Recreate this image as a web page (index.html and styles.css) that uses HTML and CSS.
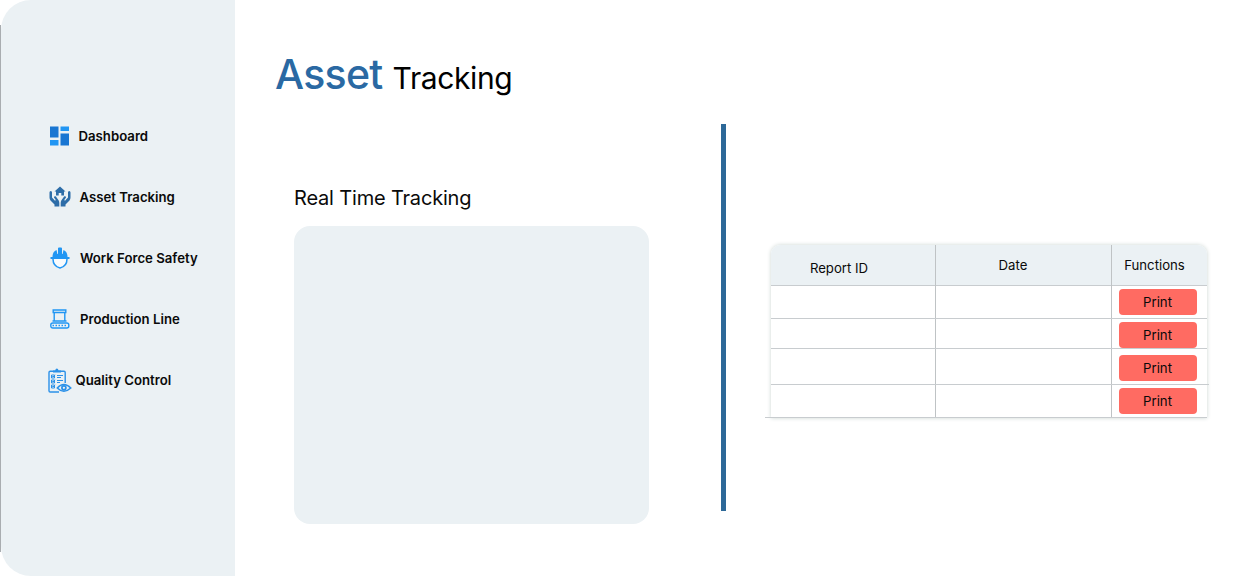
FILE: index.html
```html
<!DOCTYPE html>
<html lang="en">
<head>
<meta charset="utf-8">
<title>Asset Tracking</title>
<link rel="stylesheet" href="styles.css">
</head>
<body>
<div class="app">
  <aside class="sidebar">
    <nav class="menu">
      <a class="item dashboard">
        <svg class="icon" width="21" height="20" viewBox="0 0 21 20"><path fill="#1976d2" d="M1 .5h8.500v11H1zM11.500 7.500H20v12h-8.500z"/><path fill="#2196f3" d="M1 14h8.500v5.500H1zM11.500 .5H20V5h-8.500z"/></svg>
        <span>Dashboard</span>
      </a>
      <a class="item asset">
        <svg class="icon" width="22" height="22" viewBox="0 0 22 22" fill="#2d6da8"><path d="M11 .5l5.500 5H15V9.500H12.300V7h-2.600v2.500H7V5.500H5.500z"/><path d="M.5 6.500Q.5 5 1.800 5T3 6.500v5l3 3.200.8-.7-1.700-2.300c-.5-1.200 1-2 1.800-1.200l2.800 4Q10.300 15.500 10.300 17v3.500H5.500v-2L1.500 14.500Q.5 13 .5 11.500zM21.500 6.500Q21.500 5 20.200 5T19 6.500v5l-3 3.200-.8-.7 1.700-2.300c.5-1.200-1-2-1.800-1.200l-2.800 4q-.6 1-.6 2.500v3.500h4.800v-2l4-4q1-1.500 1-3z"/></svg>
        <span>Asset Tracking</span>
      </a>
      <a class="item safety">
        <svg class="icon" width="20" height="22" viewBox="0 0 20 22"><path fill="#2196f3" d="M2.500 10c0-3.500 1.200-6 4-7l.9 4h.6V1.500Q8 .5 9 .5h2q1 0 1 1V7h.6l.9-4c2.800 1 4 3.500 4 7H19.500v2H.5v-2z"/><path d="M3 12c0 5 3 8 7 9 4-1 7-4 7-9" fill="#f8fbfd" stroke="#2196f3" stroke-width="1.500"/></svg>
        <span>Work Force Safety</span>
      </a>
      <a class="item production">
        <svg class="icon" width="20" height="20" viewBox="0 0 20 20" fill="none" stroke="#2196f3" stroke-width="1.400"><path d="M3.200 1h12.600v2.500H3.200zM4.200 3.500h10.600v8.500H4.200zM2.500 12h14"/><rect x=".8" y="14" width="18" height="5" rx="2"/><path d="M2.500 16.500h15" stroke-dasharray="1.500 1.500" stroke-width="1.700"/></svg>
        <span>Production Line</span>
      </a>
      <a class="item quality">
        <svg class="icon" width="25" height="25" viewBox="0 0 25 25" fill="none" stroke="#2b91e8"><path d="M12 24H3.200Q2 24 2 22.700V4.500Q2 3.200 3.200 3.200H17Q18.200 3.200 18.200 4.500V15" stroke-width="1.400"/><path d="M6 4.500V2.500h2.200Q8.500.5 9.900.5t1.600 2H14v2z" fill="#2b91e8" stroke="none"/><path d="M4.500 7h3v3h-3zM4.500 12h3v3h-3zM4.500 17h3v3h-3zM5.200 8.300l.8.800 2-2.300M5.200 13.300l.8.800 2-2.300M5.200 18.300l.8.800 2-2.300M10 7.500h6M10 9.500h4M10 12.500h6M10 14.500h3" stroke-width="1"/><path d="M10.300 20Q16.700 13 23.800 20 16.700 26.500 10.300 20z" fill="#edf3f6" stroke-width="1.500"/><circle cx="16.900" cy="19.800" r="2" fill="#edf3f6" stroke-width="1.700"/></svg>
        <span>Quality Control</span>
      </a>
    </nav>
  </aside>
  <main class="content">
    <h1 class="title"><span class="accent">Asset</span><span class="rest">Tracking</span></h1>
    <div class="panels">
      <section class="live">
        <h2 class="subtitle">Real Time Tracking</h2>
        <div class="map"></div>
      </section>
      <div class="divider"></div>
      <section class="reports">
        <div class="row head"><div class="cell id">Report ID</div><div class="cell">Date</div><div class="cell">Functions</div></div>
        <div class="row r1"><div class="cell"></div><div class="cell"></div><div class="cell"><button class="print">Print</button></div></div>
        <div class="row r2"><div class="cell"></div><div class="cell"></div><div class="cell"><button class="print">Print</button></div></div>
        <div class="row r3"><div class="cell"></div><div class="cell"></div><div class="cell"><button class="print">Print</button></div></div>
        <div class="row r4"><div class="cell"></div><div class="cell"></div><div class="cell"><button class="print">Print</button></div></div>
      </section>
    </div>
  </main>
</div>
</body>
</html>
```
FILE: styles.css
```css
* { box-sizing: border-box; }
body { margin: 0; background: #fff; font-family: Inter, "Liberation Sans", sans-serif; color: #0a0a0a; }
.app { display: flex; width: 1257px; height: 576px; overflow: hidden; background: linear-gradient(#a9adb0, #a9adb0) 0 25px / 1px 527px no-repeat; }
.sidebar { width: 234px; margin-left: 1px; background: #ebf1f4; border-radius: 30px 0 0 30px; padding-top: 105px; }
.menu { display: flex; flex-direction: column; }
.item { display: flex; align-items: center; height: 61.200px; font-size: 13.200px; font-weight: 600; white-space: nowrap; }
.icon { flex: none; }
.dashboard { padding-left: 48px; gap: 8.500px; }
.asset { padding-left: 48px; gap: 8.500px; }
.safety { padding-left: 49px; gap: 10px; }
.production { padding-left: 49px; gap: 10px; }
.quality { padding-left: 46px; gap: 3.500px; }
.content { flex: 1; }
.title { display: flex; align-items: baseline; gap: 10px; margin: 49px 0 0 40px; height: 75px; line-height: 50px; font-weight: 400; }
.accent { font-size: 41px; font-weight: 500; letter-spacing: -.7px; color: #2a69a3; }
.rest { font-size: 30px; letter-spacing: -.4px; color: #000; }
.panels { display: flex; align-items: flex-start; }
.live { width: 355px; margin: 60px 0 0 59px; }
.subtitle { margin: 0; height: 42px; line-height: 28px; font-size: 20px; font-weight: 400; letter-spacing: -.18px; white-space: nowrap; }
.map { height: 298px; background: #ebf1f4; border-radius: 16px; }
.divider { width: 5px; height: 387px; margin-left: 72px; background: #2d6898; }
.reports { width: 436px; margin: 121px 0 0 45px; border-radius: 9px 9px 0 0; box-shadow: 0 0 4px #cbd5d2; }
.row { display: grid; grid-template-columns: 164px 176px 96px; border-bottom: 1px solid #c8cccf; }
.cell { border-left: 1px solid #bfc3c5; }
.cell:first-child { border-left: 0; }
.head { height: 41px; background: #ebf1f4; border-radius: 9px 9px 0 0; text-align: center; font-size: 13.200px; line-height: 40px; }
.head .cell:nth-child(2) { padding-right: 21px; }
.head .cell:nth-child(3) { padding-right: 10px; }
.head .id { padding: 3px 28px 0 0; }
.r1 { height: 33px; }
.r2 { height: 30px; }
.r3 { height: 36px; }
.r4 { height: 33px; margin-left: -6px; padding-left: 6px; }
.r3 { margin-right: -2px; }
.print { display: block; width: 78px; height: 26px; margin: 3px 0 0 6.500px; padding: 0; border: 0; border-radius: 4px; background: #ff6b62; color: #0a0a0a; font: 13.200px/26px Inter, sans-serif; }
.r3 .print { margin-top: 6px; }
```
